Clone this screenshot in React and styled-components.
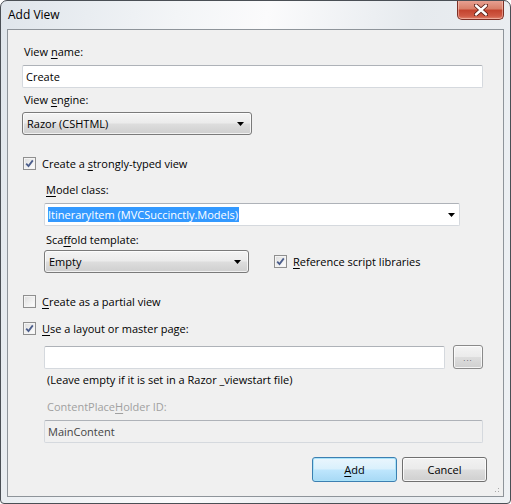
import React from "react";
import styled, { createGlobalStyle } from "styled-components";

const GlobalStyle = createGlobalStyle`
  html, body { margin: 0; padding: 0; background: #ffffff; }
  body {
    font-family: "Open Sans", "Noto Sans", "DejaVu Sans", sans-serif;
    font-size: 11px;
    color: #000;
  }
`;

const Window = styled.div`
  width: 511px;
  height: 504px;
  box-sizing: border-box;
  display: flex;
  flex-direction: column;
  padding: 0 6px 6px 6px;
  border: 1px solid #4a4f55;
  border-radius: 7px 7px 4px 4px;
  background: linear-gradient(100deg, #dfe5eb 0%, #f3f5f7 30%, #fbfbfc 45%, #e6eaee 70%, #eef1f4 100%);
  overflow: hidden;
`;

const TitleBar = styled.div`
  height: 28px;
  display: flex;
  justify-content: space-between;
  align-items: flex-start;
`;

const Title = styled.div`
  font-size: 12px;
  line-height: 16px;
  padding: 6px 0 0 1px;
  color: #000;
`;

const CloseButton = styled.div`
  width: 45px;
  height: 19px;
  margin-top: -1px;
  display: flex;
  align-items: center;
  justify-content: center;
  border: 1px solid #7d3026;
  border-top: none;
  border-radius: 0 0 5px 5px;
  background: linear-gradient(#e9a496 0%, #d9806a 45%, #c4442f 55%, #d05a45 85%, #e08670 100%);
  box-shadow: inset 0 0 0 1px rgba(255, 210, 200, 0.5);
`;

const Client = styled.div`
  flex: 1;
  position: relative;
  display: flex;
  flex-direction: column;
  padding: 14px 20px 0 14px;
  border: 1px solid #8e949a;
  background: #f0f0f0;
`;

const Label = styled.div`
  line-height: 16px;
  height: 16px;
  padding-left: ${p => p.$pad || 2}px;
  margin-top: ${p => p.$top || 0}px;
  color: ${p => (p.$disabled ? "#a0a0a0" : "#000")};
  white-space: nowrap;
`;

const Key = styled.span`
  text-decoration: underline;
  text-underline-offset: 2px;
`;

const Text = styled.span`
  white-space: pre;
`;

const TextBox = styled.div`
  box-sizing: border-box;
  height: 23px;
  width: ${p => (p.$width ? `${p.$width}px` : "auto")};
  flex: ${p => (p.$grow ? 1 : "none")};
  margin-top: ${p => p.$top || 0}px;
  display: flex;
  align-items: center;
  padding: 0 4px 0 3px;
  border: 1px solid #d5d9de;
  border-top-color: #aeb2b8;
  border-radius: 2px;
  background: ${p => (p.$disabled ? "#f0f0f0" : "#ffffff")};
  color: ${p => (p.$disabled ? "#444" : "#000")};
  white-space: nowrap;
`;

const ComboText = styled.span`
  flex: 1;
`;

const Selected = styled.span`
  background: #3399ff;
  color: #fff;
  line-height: 17px;
  padding: 0 1px 0 0;
`;

const Select = styled.div`
  box-sizing: border-box;
  height: 23px;
  width: ${p => p.$width}px;
  margin-top: ${p => p.$top || 0}px;
  display: flex;
  align-items: center;
  padding: 0 7px 0 4px;
  border: 1px solid #7a7a7a;
  border-radius: 3px;
  background: linear-gradient(#f4f4f4 0%, #ebebeb 48%, #dddddd 52%, #cfcfcf 100%);
  box-shadow: inset 0 0 0 1px rgba(255, 255, 255, 0.7);
  white-space: nowrap;
`;

const Indent = styled.div`
  display: flex;
  flex-direction: column;
  margin-left: 22px;
`;

const Row = styled.div`
  display: flex;
  align-items: center;
  gap: ${p => p.$gap || 0}px;
  margin-top: ${p => p.$top || 0}px;
`;

const CheckRow = styled.label`
  display: flex;
  align-items: center;
  height: 16px;
  margin-top: ${p => p.$top || 0}px;
  margin-left: ${p => p.$left ?? 1}px;
  white-space: nowrap;
`;

const Box = styled.span`
  box-sizing: border-box;
  width: 13px;
  height: 13px;
  margin-right: 6px;
  border: 1px solid #8f8f8f;
  background: linear-gradient(135deg, #dcdcdc 0%, #f2f2f2 60%, #ffffff 100%);
  box-shadow: inset 0 0 0 1px #f4f4f4;
  display: flex;
  align-items: center;
  justify-content: center;
`;

const SmallButton = styled.div`
  box-sizing: border-box;
  width: 30px;
  height: 24px;
  display: flex;
  align-items: center;
  justify-content: center;
  border: 1px solid #8a8a8a;
  border-radius: 3px;
  background: linear-gradient(#f4f4f4 0%, #ebebeb 48%, #dddddd 52%, #d0d0d0 100%);
  box-shadow: inset 0 0 0 1px rgba(255, 255, 255, 0.75);
  font-size: 8px;
  color: #606060;
  letter-spacing: 1px;
`;

const ButtonBar = styled.div`
  display: flex;
  justify-content: flex-end;
  gap: 5px;
  margin-top: 14px;
  margin-right: -4px;
`;

const Button = styled.div`
  box-sizing: border-box;
  width: 85px;
  height: 25px;
  display: flex;
  align-items: center;
  justify-content: center;
  border: 1px solid ${p => (p.$default ? "#3c7fb1" : "#707070")};
  border-radius: 3px;
  background: ${p =>
    p.$default
      ? "linear-gradient(#eaf6fd 0%, #d9f0fc 48%, #bee6fd 52%, #a7d9f5 100%)"
      : "linear-gradient(#f2f2f2 0%, #ebebeb 48%, #dddddd 52%, #cfcfcf 100%)"};
  box-shadow: inset 0 0 0 1px ${p => (p.$default ? "#a9e3f9" : "rgba(255,255,255,0.8)")};
`;

const Grip = styled.div`
  position: absolute;
  right: 2px;
  bottom: 2px;
  width: 10px;
  height: 10px;
  background-image: radial-gradient(#a8a8a8 0.8px, transparent 1px);
  background-size: 3px 3px;
  clip-path: polygon(100% 0, 100% 100%, 0 100%);
`;

const Arrow = () => (
  <svg width="7" height="4" viewBox="0 0 7 4" style={{ marginLeft: "auto" }}>
    <path d="M0 0 H7 L3.5 4 Z" fill="#000" />
  </svg>
);

const Check = ({ on }) => (
  <Box>
    {on && (
      <svg width="9" height="9" viewBox="0 0 9 9">
        <path d="M1.2 4.6 L3.5 7 L7.8 1.4" fill="none" stroke="#4c5e8c" strokeWidth="1.8" />
      </svg>
    )}
  </Box>
);

const CloseX = () => (
  <svg width="14" height="12" viewBox="0 0 14 12">
    <path d="M2 1.5 L12 10.5 M12 1.5 L2 10.5" stroke="#5a1e16" strokeWidth="4.2" strokeLinecap="round" />
    <path d="M2 1.5 L12 10.5 M12 1.5 L2 10.5" stroke="#ffffff" strokeWidth="2.4" strokeLinecap="round" />
  </svg>
);

export default function App() {
  return (
    <>
      <GlobalStyle />
      <Window>
        <TitleBar>
          <Title>Add View</Title>
          <CloseButton><CloseX /></CloseButton>
        </TitleBar>
        <Client>
          <Label>View <Key>n</Key>ame:</Label>
          <TextBox $top={5}>Create</TextBox>
          <Label $top={4}>View <Key>e</Key>ngine:</Label>
          <Select $width={230} $top={4}>Razor (CSHTML)<Arrow /></Select>

          <CheckRow $top={20}>
            <Check on />
            <Text>Create a <Key>s</Key>trongly-typed view</Text>
          </CheckRow>
          <Indent>
            <Label $top={11}><Key>M</Key>odel class:</Label>
            <TextBox $width={416} $top={5}>
              <ComboText><Selected>ItineraryItem (MVCSuccinctly.Models)</Selected></ComboText>
              <Arrow />
            </TextBox>
            <Label $top={6}>Sca<Key>f</Key>fold template:</Label>
            <Row $top={2} $gap={25}>
              <Select $width={205}>Empty<Arrow /></Select>
              <CheckRow $left={0}>
                <Check on />
                <Text><Key>R</Key>eference script libraries</Text>
              </CheckRow>
            </Row>
          </Indent>

          <CheckRow $top={20}>
            <Check />
            <Text><Key>C</Key>reate as a partial view</Text>
          </CheckRow>
          <CheckRow $top={11}>
            <Check on />
            <Text><Key>U</Key>se a layout or master page:</Text>
          </CheckRow>
          <Indent>
            <Row $top={9} $gap={8}>
              <TextBox $grow />
              <SmallButton>...</SmallButton>
            </Row>
            <Label $top={3} $pad={3}>(Leave empty if it is set in a Razor _viewstart file)</Label>
            <Label $top={11} $pad={3} $disabled>ContentPlace<Key>H</Key>older ID:</Label>
            <TextBox $top={5} $disabled>MainContent</TextBox>
          </Indent>

          <ButtonBar>
            <Button $default><Key>A</Key>dd</Button>
            <Button>Cancel</Button>
          </ButtonBar>
          <Grip />
        </Client>
      </Window>
    </>
  );
}
